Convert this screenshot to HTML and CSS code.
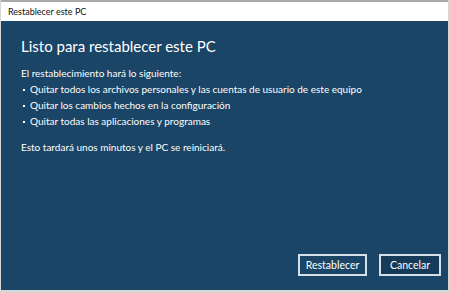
FILE: index.html
```html
<!DOCTYPE html>
<html lang="es">
<head>
  <meta charset="UTF-8" />
  <title>Restablecer este PC</title>
  <link rel="stylesheet" href="styles.css">
</head>
<body>
  <div class="window">
    <div class="titlebar">Restablecer este PC</div>
    <div class="content">
      <h1>Listo para restablecer este PC</h1>
      <p class="intro">El restablecimiento hará lo siguiente:</p>
      <ul>
        <li>Quitar todos los archivos personales y las cuentas de usuario de este equipo</li>
        <li>Quitar los cambios hechos en la configuración</li>
        <li>Quitar todas las aplicaciones y programas</li>
      </ul>
      <p class="note">Esto tardará unos minutos y el PC se reiniciará.</p>
      <div class="actions">
        <button class="default">Restablecer</button>
        <button>Cancelar</button>
      </div>
    </div>
  </div>
</body>
</html>
```

FILE: styles.css
```css
body {
  margin: 0;
  background: #d6d6d6;
  font-family: "Lato", "Open Sans", sans-serif;
}
.window {
  width: 447px;
  height: 288px;
  margin-left: 1px;
  border-top: 2px solid #a9a9a9;
  display: flex;
  flex-direction: column;
  background: #1a4566;
}
.titlebar {
  height: 19px;
  background: #fff;
  color: #111;
  font-size: 9px;
  line-height: 19px;
  padding-left: 7px;
}
.content {
  flex: 1;
  display: flex;
  flex-direction: column;
  padding: 14px 7px 14px 20px;
  color: #fff;
}
h1 {
  margin: 0 0 8px;
  font-weight: normal;
  font-size: 15px;
  line-height: 22px;
}
.intro, .note {
  margin: 0;
  font-size: 10px;
  line-height: 16px;
}
ul {
  margin: 0 0 10px;
  padding: 0;
  list-style: none;
}
li {
  font-size: 10px;
  line-height: 16px;
  padding-left: 9px;
  position: relative;
}
li::before {
  content: "";
  position: absolute;
  left: 2px;
  top: 8px;
  width: 2px;
  height: 2px;
  background: #fff;
}
.actions {
  margin-top: auto;
  display: flex;
  justify-content: flex-end;
  gap: 12px;
}
.actions button {
  font-family: "Lato", sans-serif;
  font-size: 10.5px;
  color: #fff;
  height: 22px;
  padding: 0;
  border: 2px solid #d5e1ea;
  background: #1a4566;
}
.actions .default {
  width: 69px;
}
.actions button:last-child {
  width: 62px;
  background: #163b59;
}
```
